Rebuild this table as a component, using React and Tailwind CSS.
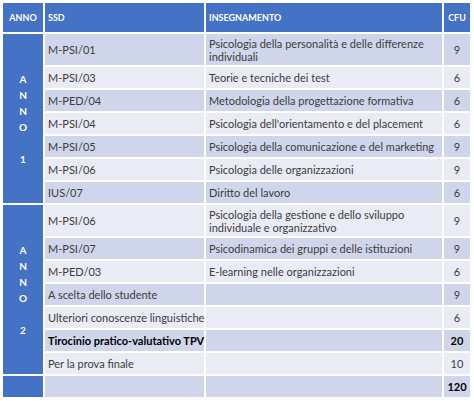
import React from "react";

const rows = [
  { ssd: "M-PSI/01", ins: "Psicologia della personalità e delle differenze individuali", cfu: "9", dbl: true },
  { ssd: "M-PSI/03", ins: "Teorie e tecniche dei test", cfu: "6" },
  { ssd: "M-PED/04", ins: "Metodologia della progettazione formativa", cfu: "6" },
  { ssd: "M-PSI/04", ins: "Psicologia dell'orientamento e del placement", cfu: "6" },
  { ssd: "M-PSI/05", ins: "Psicologia della comunicazione e del marketing", cfu: "9" },
  { ssd: "M-PSI/06", ins: "Psicologia delle organizzazioni", cfu: "9" },
  { ssd: "IUS/07", ins: "Diritto del lavoro", cfu: "6" },
  { ssd: "M-PSI/06", ins: "Psicologia della gestione e dello sviluppo individuale e organizzativo", cfu: "9", dbl: true },
  { ssd: "M-PSI/07", ins: "Psicodinamica dei gruppi e delle istituzioni", cfu: "9" },
  { ssd: "M-PED/03", ins: "E-learning nelle organizzazioni", cfu: "6" },
  { ssd: "A scelta dello studente", ins: "", cfu: "9" },
  { ssd: "Ulteriori conoscenze linguistiche", ins: "", cfu: "6" },
  { ssd: "Tirocinio pratico-valutativo TPV", ins: "", cfu: "20", bold: true },
  { ssd: "Per la prova finale", ins: "", cfu: "10" },
];

function YearCell({ n, span }) {
  return (
    <td
      rowSpan={span}
      className="bg-[#4472c4] p-0 text-center align-middle text-[10px] font-bold leading-[16px] text-white"
    >
      <div>A</div>
      <div>N</div>
      <div>N</div>
      <div>O</div>
      <div>&nbsp;</div>
      <div>{n}</div>
    </td>
  );
}

export default function App() {
  return (
    <div className="w-[474px] h-[401px] overflow-hidden bg-white pt-[1px] pl-[1px]" style={{ fontFamily: "Lato, 'Open Sans', sans-serif" }}>
      <table className="border-separate border-spacing-[2px] table-fixed w-[471px] text-[11px] text-[#3d3d3d]">
        <colgroup>
          <col className="w-[40px]" />
          <col className="w-[159px]" />
          <col className="w-[236px]" />
          <col className="w-[26px]" />
        </colgroup>
        <thead>
          <tr className="h-[29px] bg-[#4472c4] text-[9px] font-bold text-white">
            <th className="p-0 text-center font-bold">ANNO</th>
            <th className="p-0 pl-[3px] text-left font-bold">SSD</th>
            <th className="p-0 pl-[3px] text-left font-bold">INSEGNAMENTO</th>
            <th className="p-0 text-center font-bold">CFU</th>
          </tr>
        </thead>
        <tbody>
          {rows.map((r, i) => {
            const bg = i % 2 === 0 ? "bg-[#cfd5ea]" : "bg-[#e9ebf5]";
            const h = r.dbl ? "h-[31px]" : "h-[21px]";
            return (
              <tr key={i} className={h}>
                {i === 0 && <YearCell n="1" span={7} />}
                {i === 7 && <YearCell n="2" span={7} />}
                <td className={`${bg} p-0 pl-[3px] align-middle leading-[13px] whitespace-nowrap ${r.bold ? "font-bold text-black" : ""}`}>
                  {r.ssd}
                </td>
                <td className={`${bg} p-0 pl-[3px] pr-[6px] align-middle leading-[13px]`}>{r.ins}</td>
                <td className={`${bg} p-0 text-center align-middle leading-[13px] ${r.bold ? "font-bold text-black" : ""}`}>
                  {r.cfu}
                </td>
              </tr>
            );
          })}
          <tr className="h-[21px]">
            <td className="bg-[#4472c4] p-0"></td>
            <td className="bg-[#cfd5ea] p-0"></td>
            <td className="bg-[#cfd5ea] p-0"></td>
            <td className="bg-[#cfd5ea] p-0 text-center align-middle font-bold leading-[13px] text-black">120</td>
          </tr>
        </tbody>
      </table>
    </div>
  );
}
